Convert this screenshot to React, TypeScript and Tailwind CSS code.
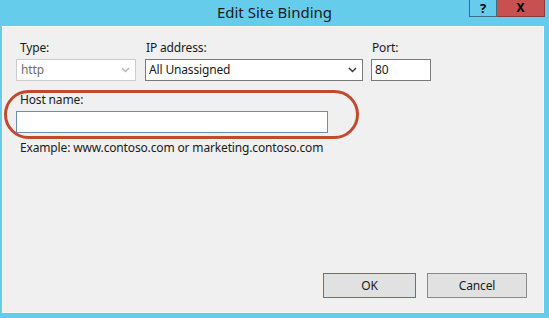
import React from 'react';

const font = { fontFamily: '"Noto Sans", "Open Sans", sans-serif' };

function Chevron({ color }: { color: string }) {
  return (
    <svg width="9" height="6" viewBox="0 0 9 6" className="shrink-0">
      <path d="M1 1 L4.5 4.5 L8 1" fill="none" stroke={color} strokeWidth="1.4" />
    </svg>
  );
}

export default function App() {
  return (
    <div
      className="w-[549px] h-[318px] bg-[#66CCEB] flex flex-col overflow-hidden text-[12px] text-[#1a1a1a] tracking-[-0.15px]"
      style={font}
    >
      {/* title bar */}
      <div className="relative h-[26px] flex items-center justify-center">
        <span className="text-[15px] text-[#1a1a1a] leading-none mt-[-2px] tracking-normal">Edit Site Binding</span>
        <div className="absolute right-[4px] top-0 flex">
          <div className="w-[28px] h-[17px] border border-[#3b6f85] border-t-0 bg-[#66CCEB] flex items-center justify-center text-[13px] font-bold leading-none text-black">
            ?
          </div>
          <div className="w-[48px] h-[17px] border border-[#8c3a34] border-t-0 border-l-0 bg-[#C75050] flex items-center justify-center text-[12px] font-bold leading-none text-black">
            X
          </div>
        </div>
      </div>

      {/* content panel */}
      <div className="relative ml-[2px] w-[542px] h-[287px] bg-[#F0F0F0] border border-[#f7f7f7] flex flex-col px-[13px] pt-[13px] pb-[14px]">
        {/* top row */}
        <div className="flex gap-[9px]">
          <div className="flex flex-col w-[120px]">
            <span className="h-[19px] leading-[16px] pl-[4px]">Type:</span>
            <div className="h-[22px] bg-white border border-[#cccccc] flex items-center justify-between pl-[4px] pr-[5px]">
              <span className="text-[#6d6d6d]">http</span>
              <Chevron color="#b5b5b5" />
            </div>
          </div>
          <div className="flex flex-col w-[218px]">
            <span className="h-[19px] leading-[16px] pl-[1px]">IP address:</span>
            <div className="h-[22px] bg-white border border-[#7a7a7a] flex items-center justify-between pl-[3px] pr-[5px]">
              <span>All Unassigned</span>
              <Chevron color="#333333" />
            </div>
          </div>
          <div className="flex flex-col w-[60px] ml-[-1px]">
            <span className="h-[19px] leading-[16px] pl-[1px]">Port:</span>
            <div className="h-[22px] bg-white border border-[#7a7a7a] flex items-center pl-[3px]">
              <span>80</span>
            </div>
          </div>
        </div>

        {/* host name */}
        <div className="flex flex-col mt-[10px]">
          <span className="h-[20px] leading-[16px] pl-[4px] pt-[1px]">Host name:</span>
          <div className="w-[312px] h-[22px] bg-white border border-[#6d8fa9]" />
          <span className="mt-[7px] pl-[4px] leading-[16px]">Example: www.contoso.com or marketing.contoso.com</span>
        </div>

        {/* red highlight */}
        <div className="absolute left-[1px] top-[63px] w-[355px] h-[49px] rounded-full border-[3px] border-[#BF4A30] pointer-events-none" />

        {/* buttons */}
        <div className="mt-auto flex justify-end gap-[11px] pr-[3px]">
          <button className="w-[93px] h-[25px] bg-[#E1E1E1] border border-[#3C7FB1] text-[12px] text-[#1a1a1a]">
            OK
          </button>
          <button className="w-[100px] h-[25px] bg-[#E1E1E1] border border-[#8a8a8a] text-[12px] text-[#1a1a1a]">
            Cancel
          </button>
        </div>
      </div>
    </div>
  );
}
